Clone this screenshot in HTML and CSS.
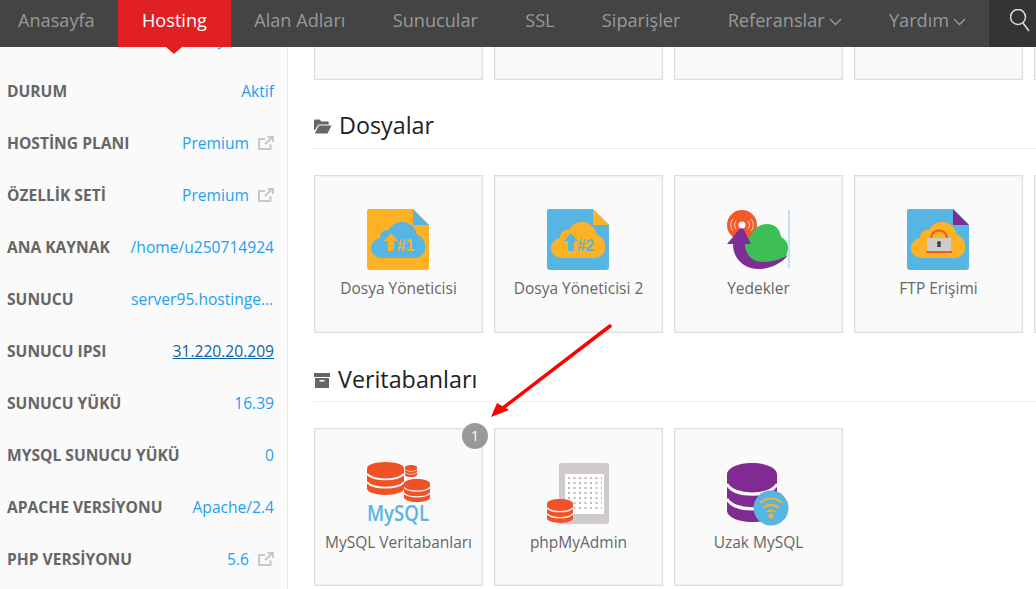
FILE: index.html
```html
<!DOCTYPE html>
<html lang="en">
<head>
    <meta charset="UTF-8">
    <meta name="viewport" content="width=device-width, initial-scale=1.0">
    <title>Hosting</title>
    <link rel="stylesheet" href="styles.css">
</head>
<body>
    <svg class="defs" width="0" height="0">
        <symbol id="cloud" viewBox="0 0 54 36">
            <rect x="0" y="16" width="54" height="20" rx="10"/>
            <circle cx="31" cy="15" r="15"/>
            <circle cx="16" cy="15" r="7"/>
            <circle cx="42" cy="24" r="12"/>
        </symbol>
        <symbol id="db" viewBox="0 0 40 36" preserveAspectRatio="none">
            <path d="M0 7C0 3 9 0 20 0s20 3 20 7v22c0 4-9 7-20 7S0 33 0 29z"/>
            <path d="M0 13c3 4 11 6 20 6s17-2 20-6M0 22c3 4 11 6 20 6s17-2 20-6" fill="none" stroke="#fafafa" stroke-width="2"/>
        </symbol>
    </svg>

    <nav class="topbar">
        <a href="#">Anasayfa</a>
        <a href="#" class="active">Hosting</a>
        <a href="#">Alan Adları</a>
        <a href="#">Sunucular</a>
        <a href="#">SSL</a>
        <a href="#">Siparişler</a>
        <a href="#">Referanslar<svg class="chevron" viewBox="0 0 13 8"><path d="M1 1l5.500 5.500L12 1"/></svg></a>
        <a href="#">Yardım<svg class="chevron" viewBox="0 0 13 8"><path d="M1 1l5.500 5.500L12 1"/></svg></a>
        <div class="search">
            <svg viewBox="0 0 20 23"><circle cx="8" cy="8" r="7.500"/><path d="M13 14l6 8"/></svg>
        </div>
    </nav>

    <div class="layout">
        <aside class="sidebar">
            <div class="row"><a href="#" class="val val-first">yönetici</a></div>
            <div class="row"><span class="key">DURUM</span><a href="#" class="val">Aktif</a></div>
            <div class="row"><span class="key">HOSTİNG PLANI</span><a href="#" class="val">Premium</a><svg class="ext" viewBox="0 0 16 14"><path d="M12.500 8v5H1V3h6M7 8l7-6.500M9.500 1H15v5"/></svg></div>
            <div class="row"><span class="key">ÖZELLİK SETİ</span><a href="#" class="val">Premium</a><svg class="ext" viewBox="0 0 16 14"><path d="M12.500 8v5H1V3h6M7 8l7-6.500M9.500 1H15v5"/></svg></div>
            <div class="row"><span class="key">ANA KAYNAK</span><a href="#" class="val">/home/u250714924</a></div>
            <div class="row"><span class="key">SUNUCU</span><a href="#" class="val cut">server95.hostinger.web.tr</a></div>
            <div class="row"><span class="key">SUNUCU IPSI</span><a href="#" class="val ip">31.220.20.209</a></div>
            <div class="row"><span class="key">SUNUCU YÜKÜ</span><a href="#" class="val">16.39</a></div>
            <div class="row"><span class="key">MYSQL SUNUCU YÜKÜ</span><a href="#" class="val">0</a></div>
            <div class="row"><span class="key">APACHE VERSİYONU</span><a href="#" class="val">Apache/2.4</a></div>
            <div class="row"><span class="key">PHP VERSİYONU</span><a href="#" class="val">5.6</a><svg class="ext" viewBox="0 0 16 14"><path d="M12.500 8v5H1V3h6M7 8l7-6.500M9.500 1H15v5"/></svg></div>
        </aside>

        <main class="content">
            <div class="cards cards-top">
                <div class="card"></div>
                <div class="card"></div>
                <div class="card"></div>
                <div class="card"></div>
                <div class="card"></div>
            </div>

            <h2 class="section">
                <svg class="section-icon icon-folder" viewBox="0 0 18 15"><path d="M0 2c0-1 .6-1.500 1.500-1.500h4L7.500 2.500h6c.8 0 1.300.6 1.300 1.300V5.500H4.500L0 12z"/><path d="M5 6.500h12.500L13.500 14.500H.8z"/></svg>
                Dosyalar
            </h2>
            <div class="cards">
                <div class="card">
                    <svg class="icon" width="63" height="61" viewBox="0 0 63 61">
                        <path d="M2 0h44l16 16v42a3 3 0 0 1-3 3H3a3 3 0 0 1-3-3V2a2 2 0 0 1 2-2z" fill="#fdb124"/>
                        <path d="M46 0l16 16H46z" fill="#57b5e4"/>
                        <use href="#cloud" x="4" y="13" width="54" height="36" fill="#57b5e4"/>
                        <path d="M24 24l7 8h-4v10h-6V32h-4z" fill="#fdb124"/>
                        <text x="30" y="42" class="icon-num" fill="#fdb124" textLength="17" lengthAdjust="spacingAndGlyphs">#1</text>
                    </svg>
                    <span class="label">Dosya Yöneticisi</span>
                </div>
                <div class="card">
                    <svg class="icon" width="63" height="61" viewBox="0 0 63 61">
                        <path d="M2 0h44l16 16v42a3 3 0 0 1-3 3H3a3 3 0 0 1-3-3V2a2 2 0 0 1 2-2z" fill="#57b5e4"/>
                        <path d="M46 0l16 16H46z" fill="#fdb124"/>
                        <use href="#cloud" x="4" y="13" width="54" height="36" fill="#fdb124"/>
                        <path d="M24 24l7 8h-4v10h-6V32h-4z" fill="#57b5e4"/>
                        <text x="30" y="42" class="icon-num" fill="#57b5e4" textLength="17" lengthAdjust="spacingAndGlyphs">#2</text>
                    </svg>
                    <span class="label">Dosya Yöneticisi 2</span>
                </div>
                <div class="card">
                    <svg class="icon" width="63" height="61" viewBox="0 0 63 61">
                        <path d="M62 1v58" stroke="#8cc6ea" stroke-width="1"/>
                        <circle cx="15" cy="16" r="15" fill="#f15a29"/>
                        <path d="M18 37c0-7 4-10 7-11 1-6 7-11 15-11s13 5 14 13c4 2 7 6 7 10 0 8-3 12-9 14l-12 2c-12 0-22-6-22-17z" fill="#3dbf55"/>
                        <path d="M6 35H0l15-18 9 18h-6c0 11 8 18 18 18s18-3 25-7c-6 8-17 14-29 14-15 0-26-10-26-25z" fill="#7f2d96"/>
                        <path d="M9 12c-2 3-2 5 0 8M6 10c-3 4-3 8 0 12M21 12c2 3 2 5 0 8M24 10c3 4 3 8 0 12" fill="none" stroke="#fbd9cc" stroke-width="1"/>
                        <circle cx="15" cy="16" r="3.500" fill="#fff"/>
                    </svg>
                    <span class="label">Yedekler</span>
                </div>
                <div class="card">
                    <svg class="icon" width="63" height="61" viewBox="0 0 63 61">
                        <path d="M2 0h44l16 16v42a3 3 0 0 1-3 3H3a3 3 0 0 1-3-3V2a2 2 0 0 1 2-2z" fill="#57b5e4"/>
                        <path d="M46 0l16 16H46z" fill="#7f2d96"/>
                        <use href="#cloud" x="4" y="13" width="54" height="36" fill="#fdb124"/>
                        <path d="M24 29c0-10 16-10 16 0" fill="none" stroke="#f15a29" stroke-width="2"/>
                        <rect x="20" y="29" width="24" height="13" fill="#cfcdc8"/>
                        <circle cx="32" cy="34" r="2" fill="#444"/>
                        <path d="M31 34h2l1 4h-4z" fill="#444"/>
                        <rect x="19" y="42" width="26" height="2" fill="#f15a29"/>
                    </svg>
                    <span class="label">FTP Erişimi</span>
                </div>
                <div class="card"></div>
            </div>

            <h2 class="section section-low">
                <svg class="section-icon icon-box" viewBox="0 0 16 15"><path d="M0 0h16v4H0z"/><path d="M1 5h14v10H1zM5.500 7v1.500h5V7z" fill-rule="evenodd"/></svg>
                Veritabanları
            </h2>
            <div class="cards">
                <div class="card">
                    <span class="badge">1</span>
                    <svg class="icon icon-tall" width="63" height="63" viewBox="0 0 63 63">
                        <use href="#db" x="0" y="0" width="37" height="33" fill="#f05228"/>
                        <use href="#db" x="38" y="3" width="12" height="12" fill="#f05228"/>
                        <use href="#db" x="37" y="17" width="26" height="23" fill="#f05228"/>
                        <text x="0" y="59" class="icon-mysql" fill="#57b5e4" textLength="62" lengthAdjust="spacingAndGlyphs">MySQL</text>
                    </svg>
                    <span class="label">MySQL Veritabanları</span>
                </div>
                <div class="card">
                    <svg class="icon icon-tall" width="63" height="63" viewBox="0 0 63 63">
                        <rect x="12" y="1" width="50" height="61" rx="3" fill="#cfcbcb"/>
                        <rect x="18" y="12" width="39" height="40" fill="#fff"/>
                        <path d="M21 16h34M21 21h34M21 26h34M21 31h34M21 36h34M21 41h34M21 46h34" stroke="#bdb9b9" stroke-width="2" stroke-dasharray="2 3.500" fill="none"/>
                        <use href="#db" x="0" y="37" width="26" height="24" fill="#f05228"/>
                    </svg>
                    <span class="label">phpMyAdmin</span>
                </div>
                <div class="card">
                    <svg class="icon icon-tall" width="63" height="63" viewBox="0 0 63 63">
                        <use href="#db" x="0" y="1" width="50" height="59" fill="#7f2b92"/>
                        <circle cx="44" cy="46" r="17.500" fill="#57b5e4"/>
                        <path d="M33 41c6-6 16-6 22 0M36 46c4-4 12-4 16 0M40 50c2-2 6-2 8 0" fill="none" stroke="#fdb124" stroke-width="2"/>
                        <circle cx="44" cy="54" r="2.500" fill="#fdb124"/>
                    </svg>
                    <span class="label">Uzak MySQL</span>
                </div>
            </div>
        </main>
    </div>

    <svg class="arrow" width="1036" height="589" viewBox="0 0 1036 589">
        <path d="M610 326L503 408" stroke="#f00" stroke-width="3.500" stroke-linecap="round" fill="none"/>
        <path d="M491 417L497 403 509 410z" fill="#f00"/>
    </svg>
</body>
</html>
```

FILE: styles.css
```css
* {
    box-sizing: border-box;
}
html, body {
    height: 589px;
    overflow: hidden;
}
body {
    margin: 0;
    font-family: "Open Sans", sans-serif;
    background-color: #fff;
    color: #666;
}
.defs {
    position: absolute;
}
.topbar {
    position: relative;
    z-index: 2;
    display: flex;
    height: 47px;
    padding-left: 18px;
    background-color: #444;
    font-size: 18.150px;
}
.topbar a {
    display: flex;
    align-items: center;
    padding: 0 23.650px 7px;
    color: #999;
    text-decoration: none;
    white-space: nowrap;
}
.topbar a:first-child {
    padding-left: 0;
}
.topbar a.active {
    position: relative;
    background-color: #e12024;
    color: #fff;
}
.topbar a.active::after {
    content: "";
    position: absolute;
    left: 50%;
    bottom: -7px;
    margin-left: -8px;
    border-left: 8px solid transparent;
    border-right: 8px solid transparent;
    border-top: 7px solid #e12024;
}
.chevron {
    width: 13px;
    height: 8px;
    margin-left: 4px;
    margin-top: 3px;
    fill: none;
    stroke: #999;
    stroke-width: 1.300;
}
.search {
    position: absolute;
    top: 0;
    right: 0;
    display: flex;
    align-items: center;
    width: 47px;
    height: 47px;
    padding: 0 0 7px 21px;
    background-color: #333;
}
.search svg {
    width: 20px;
    height: 23px;
    fill: none;
    stroke: #ddd;
    stroke-width: 1.500;
}
.layout {
    display: flex;
    margin-top: -34px;
    height: 576px;
}
.sidebar {
    flex: 0 0 288px;
    padding-right: 13px;
    padding-left: 7px;
    background-color: #fafafa;
    border-right: 1px solid #e8e8e8;
}
.row {
    display: flex;
    align-items: center;
    height: 52px;
    padding-bottom: 1px;
    font-size: 15.600px;
}
.key {
    font-weight: 700;
    color: #666;
    white-space: nowrap;
    margin-right: auto;
}
.val {
    color: #1e9ff2;
    text-decoration: none;
    white-space: nowrap;
}
.val-first {
    margin-left: auto;
}
.cut {
    max-width: 143px;
    overflow: hidden;
    text-overflow: ellipsis;
}
.ip {
    color: #0c63a8;
    text-decoration: underline;
}
.ext {
    width: 16px;
    height: 14px;
    margin-left: 9px;
    fill: none;
    stroke: #c8c8c8;
    stroke-width: 2;
}
.content {
    flex: 1;
    min-width: 0;
    padding-left: 26px;
}
.cards {
    display: flex;
    gap: 11px;
}
.cards-top {
    margin-top: -91px;
}
.card {
    position: relative;
    flex: 0 0 169px;
    height: 158px;
    padding-top: 33px;
    background-color: #fafafa;
    border: 1px solid #dedede;
    box-shadow: inset 0 0 0 1px #f0f0f0;
    text-align: center;
}
.icon {
    display: block;
    margin: 0 auto 7px;
    overflow: visible;
}
.icon-tall {
    margin-bottom: 6px;
}
.label {
    font-size: 15.500px;
    color: #666;
    white-space: nowrap;
}
.icon-num {
    font-family: "Liberation Sans", sans-serif;
    font-size: 17px;
    font-weight: 700;
}
.icon-mysql {
    font-family: "Open Sans", sans-serif;
    font-size: 21px;
    font-weight: 600;
}
.badge {
    position: absolute;
    top: -6px;
    right: -6px;
    width: 26px;
    height: 26px;
    border-radius: 50%;
    background-color: #999;
    color: #fff;
    font-size: 14px;
    line-height: 26px;
    text-align: center;
}
.section {
    display: flex;
    align-items: center;
    gap: 8px;
    height: 69px;
    margin: 0 0 26px;
    padding-top: 21px;
    border-bottom: 1px solid #eee;
    font-size: 23.300px;
    font-weight: 400;
    color: #222;
}
.section-low {
    padding-top: 23px;
}
.section-icon {
    height: 15px;
    margin-top: 3px;
    fill: #666;
}
.icon-folder {
    width: 18px;
    margin-right: -1px;
}
.icon-box {
    width: 16px;
}
.arrow {
    position: absolute;
    top: 0;
    left: 0;
    z-index: 3;
    pointer-events: none;
}
```
